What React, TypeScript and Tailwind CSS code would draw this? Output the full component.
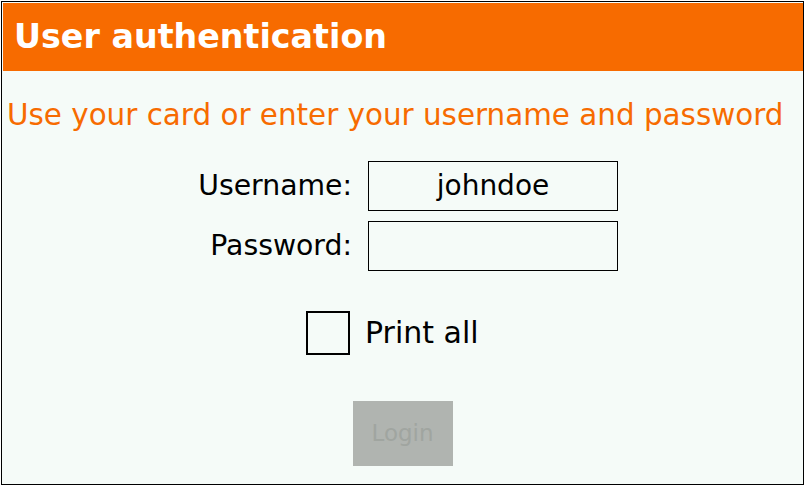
import React from "react";

export default function App() {
  return (
    <div className="w-[808px] h-[488px] bg-white" style={{ fontFamily: '"DejaVu Sans", sans-serif' }}>
      <div className="ml-px mt-px w-[803px] h-[484px] border border-black bg-[#f5fbf8] pl-px pt-px flex flex-col">
        {/* Header */}
        <div className="h-[68px] bg-[#f76b00] flex items-center pl-[11px]">
          <h1 className="text-white font-bold text-[33.3px] leading-none">User authentication</h1>
        </div>

        {/* Hint */}
        <p className="mt-[25px] pl-[4px] text-[#f76b00] text-[29.4px] leading-[38px]">
          Use your card or enter your username and password
        </p>

        {/* Credentials */}
        <div className="mt-[27px] flex flex-col gap-[10px] pl-[179px]">
          <div className="flex items-center gap-[16px]">
            <label className="w-[170px] text-right text-[28.3px] text-black">Username:</label>
            <div className="w-[250px] h-[50px] border border-black flex items-center justify-center text-[28px] text-black">
              johndoe
            </div>
          </div>
          <div className="flex items-center gap-[16px]">
            <label className="w-[170px] text-right text-[28.3px] text-black">Password:</label>
            <div className="w-[250px] h-[50px] border border-black" />
          </div>
        </div>

        {/* Print all */}
        <div className="mt-[39px] flex items-center pl-[303px] gap-[15px]">
          <div className="w-[44px] h-[44px] border-2 border-black" />
          <span className="text-[30px] text-black">Print all</span>
        </div>

        {/* Login */}
        <div className="mt-[46px] flex justify-center pr-[1px]">
          <button className="w-[100px] h-[65px] bg-[#b0b4b0] text-[#a0a5a0] text-[23px]">Login</button>
        </div>
      </div>
    </div>
  );
}
